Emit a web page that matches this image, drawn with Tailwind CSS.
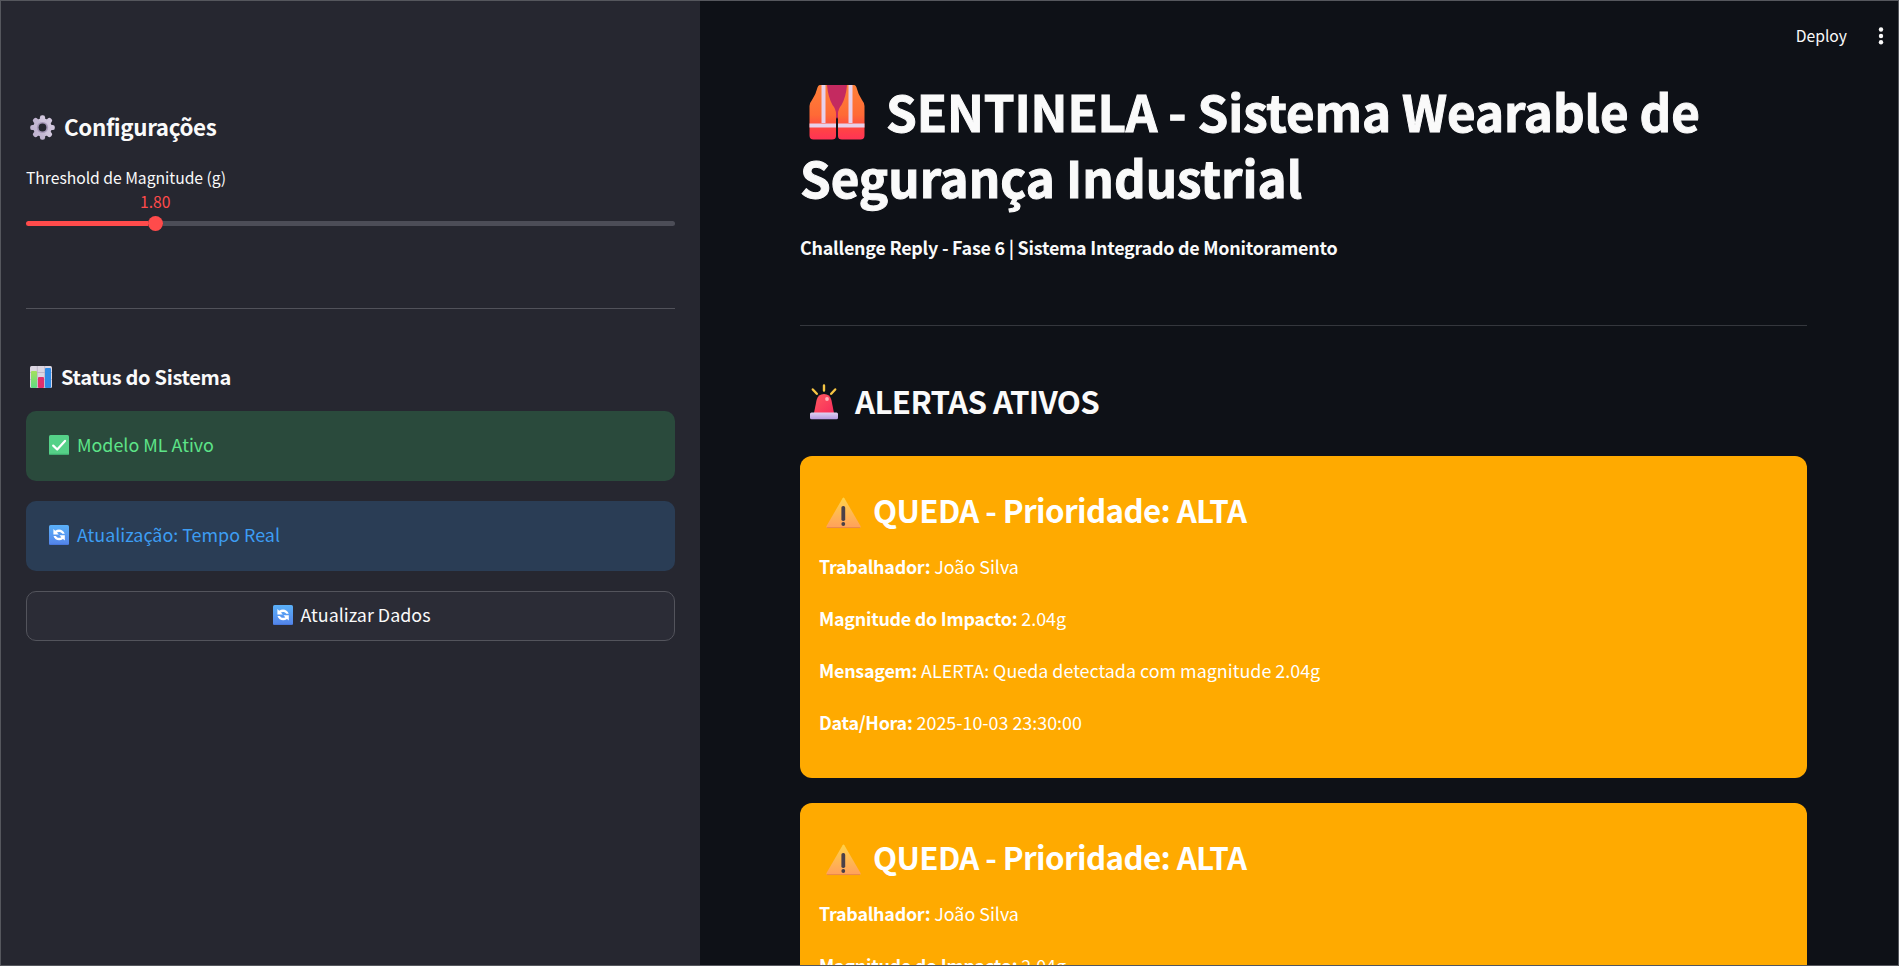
<!DOCTYPE html>
<html lang="pt-BR">
<head>
<meta charset="utf-8">
<title>SENTINELA</title>
<script src="https://cdn.jsdelivr.net/npm/@tailwindcss/browser@4"></script>
</head>
<body class="bg-[#0e1117]">
<svg class="absolute h-0 w-0">
  <defs>
    <linearGradient id="vest" x1="0" y1="0" x2="0" y2="1"><stop offset="0" stop-color="#ff8038"/><stop offset=".55" stop-color="#ff6a36"/><stop offset=".8" stop-color="#ff4444"/><stop offset="1" stop-color="#ff3355"/></linearGradient>
    <linearGradient id="warn" x1="0" y1="0" x2="0" y2="1"><stop offset="0" stop-color="#ffd24a"/><stop offset="1" stop-color="#ffa05c"/></linearGradient>
    <linearGradient id="sync" x1="0" y1="0" x2="0" y2="1"><stop offset="0" stop-color="#5ab0f8"/><stop offset="1" stop-color="#5484ea"/></linearGradient>
    <linearGradient id="gear" gradientUnits="userSpaceOnUse" x1="10" y1="-10" x2="-10" y2="10"><stop offset="0" stop-color="#d9cfe4"/><stop offset="1" stop-color="#b9acca"/></linearGradient>
    <linearGradient id="dome" x1="0" y1="0" x2="1" y2="1"><stop offset="0" stop-color="#ff5a5e"/><stop offset="1" stop-color="#f72c5c"/></linearGradient>
    <linearGradient id="base" x1="0" y1="0" x2="0" y2="1"><stop offset="0" stop-color="#e0d2f2"/><stop offset="1" stop-color="#b49ade"/></linearGradient>
    <linearGradient id="barg" x1="0" y1="0" x2="0" y2="1"><stop offset="0" stop-color="#a4e05c"/><stop offset="1" stop-color="#5fdc84"/></linearGradient>
    <symbol id="i-sync" viewBox="0 0 20 20"><rect width="20" height="20" rx="1.6" fill="url(#sync)"/><path d="M.4 19.400h19.200" stroke="#3f6fd0" stroke-width="1" opacity=".6"/><path d="M4.400 4v5.400h5.400L7.900 7.500c1.800-1.100 4.300-.6 5.400 1.300h2.400C14.600 4.700 9.600 3.200 6.200 5.800zM15.800 15.600v-5.300h-5.400l1.900 1.900c-1.800 1.200-4.300.7-5.400-1.300H4.500c1.100 4.200 6.100 5.600 9.500 3z" fill="#fff"/></symbol>
    <symbol id="i-warn" viewBox="0 0 35 32"><path d="M16.600 1.200q.9-1.400 1.800 0L34.500 29q.6 1.800-1 2h-32q-1.600-.2-1-2z" fill="url(#warn)"/><path d="M1 30.600h33" stroke="#e8884c" stroke-width="1"/><rect x="15.400" y="9" width="3.800" height="15" rx="1.700" fill="#4a4048"/><circle cx="17.300" cy="27" r="1.900" fill="#4a4048"/></symbol>
  </defs>
</svg>
<div class="relative flex h-[966px] w-[1899px] overflow-hidden font-['Noto_Sans_CJK_SC','Noto_Sans',sans-serif] text-[17.9px] text-[#fafafa]">
  <aside class="flex w-[700px] shrink-0 flex-col bg-[#262730] pt-[111px] pr-[25px] pl-[26px]">
    <h2 class="flex h-[30px] items-center pl-1 text-[22.4px] leading-[30px] font-semibold tracking-[-0.38px]">
      <svg class="mt-[3px] mr-[9px] h-[25px] w-[25px] shrink-0" viewBox="-12.500 -12.500 25 25"><g fill="url(#gear)"><circle r="9.300"/><rect x="-2.600" y="-12.300" width="5.200" height="24.600" rx="2.200"/><rect x="-12.300" y="-2.600" width="24.600" height="5.200" rx="2.200"/><g transform="rotate(45)"><rect x="-2.600" y="-12.300" width="5.200" height="24.600" rx="2.200"/><rect x="-12.300" y="-2.600" width="24.600" height="5.200" rx="2.200"/></g></g><circle r="5.600" fill="#a698b8"/><circle r="3.900" fill="#262730"/></svg>
      <span>Configurações</span>
    </h2>
    <div class="mt-[27px] h-5 text-[15.7px] leading-5 tracking-[-0.03px]">Threshold de Magnitude (g)</div>
    <div class="mt-1 h-5 pl-[114px] text-[15.7px] leading-5 text-[#ff4b4b]">1.80</div>
    <div class="mt-1 flex h-[15px] items-center">
      <div class="h-[5px] w-[122px] rounded-l-full bg-[#ff4b4b]"></div>
      <div class="size-[15px] rounded-full bg-[#ff4b4b]"></div>
      <div class="h-[5px] flex-1 rounded-r-full bg-[#4c4d57]"></div>
    </div>
    <div class="mt-[77px] h-px bg-[#51525a]"></div>
    <h3 class="mt-[53px] flex h-[30px] items-center pl-1 text-[20px] leading-[30px] font-semibold tracking-[-0.33px]">
      <svg class="mr-[9px] size-[22px] shrink-0" viewBox="0 0 22 22"><rect width="22" height="22" rx="1.500" fill="#dcd6e2"/><path d="M0 6.500h22M0 13.500h22M7.300 0v22M14.700 0v22" stroke="#b9b0c4" stroke-width=".8"/><rect x="1" y="5" width="6" height="17" rx="1" fill="url(#barg)"/><rect x="8" y="11" width="6" height="11" rx="1" fill="#e0306c"/><rect x="15" y="2" width="6" height="20" rx="1" fill="#2f8be6"/></svg>
      <span>Status do Sistema</span>
    </h3>
    <div class="mt-[19px] flex h-[70px] items-center rounded-[10px] bg-[#2a4a3c] pl-[23px] text-[#5de488]">
      <svg class="mr-2 mb-[2px] size-5 shrink-0" viewBox="0 0 20 20"><rect width="20" height="20" rx="1.500" fill="#55d188"/><path d="M.4 19.300h19.200" stroke="#3ba46c" stroke-width="1"/><path d="M4.200 10.600l4 3.900 7.800-8.600" fill="none" stroke="#fff" stroke-width="2.200" stroke-linecap="round" stroke-linejoin="round"/></svg>
      <span class="pb-1">Modelo ML Ativo</span>
    </div>
    <div class="mt-5 flex h-[70px] items-center rounded-[10px] bg-[#2a3d55] pl-[23px] text-[#3d9df3]">
      <svg class="mr-2 mb-[2px] size-5 shrink-0"><use href="#i-sync"/></svg>
      <span class="pb-1">Atualização: Tempo Real</span>
    </div>
    <button class="mt-5 flex h-[50px] items-center justify-center rounded-[10px] border border-[#53545c] bg-[#2b2c36] pl-[3px]">
      <svg class="mr-[7px] mb-[2px] size-5 shrink-0"><use href="#i-sync"/></svg>
      <span class="pb-1">Atualizar Dados</span>
    </button>
  </aside>
  <main class="flex w-[1107px] shrink-0 flex-col pt-[78px] pl-[100px]">
    <h1 class="text-[49.300px] leading-[66px] font-bold [-webkit-text-stroke:1px_#fafafa]">
      <span class="flex items-center tracking-[-0.1px] whitespace-nowrap"><svg class="mt-[3px] mr-[21px] ml-[9px] h-[55px] w-[56px] shrink-0" viewBox="0 0 56 55"><path d="M17 0h22v14L28 34 17 14z" fill="#c42a60"/><path d="M11 0h7q1 12 5.500 20 3.500 4 3.500 9v22q0 3.500-4 3.500H4.500Q.5 54.500.5 50.500V21Q.5 18 3 15q4-6 5-11 1-4 3-4z" fill="url(#vest)"/><path d="M45 0h-7q-1 12-5.500 20-3.500 4-3.500 9v22q0 3.500 4 3.500h18.500q4 0 4-4V21q0-3-2.500-6-4-6-5-11-1-4-3-4z" fill="url(#vest)"/><path d="M12.500 0h4v38h-4zM39.500 0h4v38h-4zM.5 38.500H27v4H.5zM29 38.500h26.500v4H29z" fill="#e8d0ea"/></svg><span>SENTINELA - Sistema Wearable de</span></span>
      <span>Segurança Industrial</span>
    </h1>
    <div class="mt-[22px] h-[30px] leading-[30px] font-semibold tracking-[-0.23px]">Challenge Reply - Fase 6 | Sistema Integrado de Monitoramento</div>
    <div class="mt-[63px] h-px shrink-0 bg-[#34373d]"></div>
    <h2 class="mt-[54px] flex h-[42px] shrink-0 items-center pl-[10px] text-[31.300px] leading-[42px] font-semibold tracking-[-0.640px]">
      <svg class="mt-[1px] mr-[17px] h-[36px] w-7 shrink-0" viewBox="0 0 28 36"><path d="M14 1.500v5M2.800 5.500l4 4.300M25.200 5.500l-4 4.300" stroke="#f6c544" stroke-width="2.400" stroke-linecap="round"/><path d="M4 29l2.600-13Q8 10 14 10t7.400 6L24 29z" fill="url(#dome)"/><circle cx="17" cy="15" r="1.900" fill="#ffb3b8"/><rect y="28.500" width="28" height="6.800" rx="1.500" fill="url(#base)"/></svg>
      <span>ALERTAS ATIVOS</span>
    </h2>
    <section class="mt-[34px] flex h-[322px] shrink-0 flex-col rounded-[12px] bg-[#ffaa00] px-[19px] pt-[33px] text-white">
      <h2 class="flex h-[42px] items-center pl-[7px] text-[31.300px] leading-[42px] font-semibold tracking-[-0.600px]"><svg class="mt-[5px] mr-[12px] h-8 w-[35px] shrink-0"><use href="#i-warn"/></svg><span>QUEDA - Prioridade: ALTA</span></h2>
      <div class="mt-5 flex flex-col gap-[22px] leading-[30px]">
        <p><b class="font-semibold tracking-[-0.25px]">Trabalhador:</b> João Silva</p>
        <p><b class="font-semibold tracking-[-0.25px]">Magnitude do Impacto:</b> 2.04g</p>
        <p><b class="font-semibold tracking-[-0.25px]">Mensagem:</b> ALERTA: Queda detectada com magnitude 2.04g</p>
        <p><b class="font-semibold tracking-[-0.25px]">Data/Hora:</b> 2025-10-03 23:30:00</p>
      </div>
    </section>
    <section class="mt-[25px] flex h-[322px] shrink-0 flex-col rounded-[12px] bg-[#ffaa00] px-[19px] pt-[33px] text-white">
      <h2 class="flex h-[42px] items-center pl-[7px] text-[31.300px] leading-[42px] font-semibold tracking-[-0.600px]"><svg class="mt-[5px] mr-[12px] h-8 w-[35px] shrink-0"><use href="#i-warn"/></svg><span>QUEDA - Prioridade: ALTA</span></h2>
      <div class="mt-5 flex flex-col gap-[22px] leading-[30px]">
        <p><b class="font-semibold tracking-[-0.25px]">Trabalhador:</b> João Silva</p>
        <p><b class="font-semibold tracking-[-0.25px]">Magnitude do Impacto:</b> 2.04g</p>
      </div>
    </section>
  </main>
  <header class="absolute top-0 right-0 flex h-[71px] items-center pr-[15px]">
    <span class="mr-[31px] text-[15.700px] leading-5">Deploy</span>
    <svg class="h-[18px] w-[6px]" viewBox="0 0 6 18" fill="#fafafa"><circle cx="3" cy="2.500" r="2.200"/><circle cx="3" cy="9" r="2.200"/><circle cx="3" cy="15.300" r="2.200"/></svg>
  </header>
  <div class="pointer-events-none absolute inset-0 border border-[#55575d]"></div>
</div>
</body>
</html>
